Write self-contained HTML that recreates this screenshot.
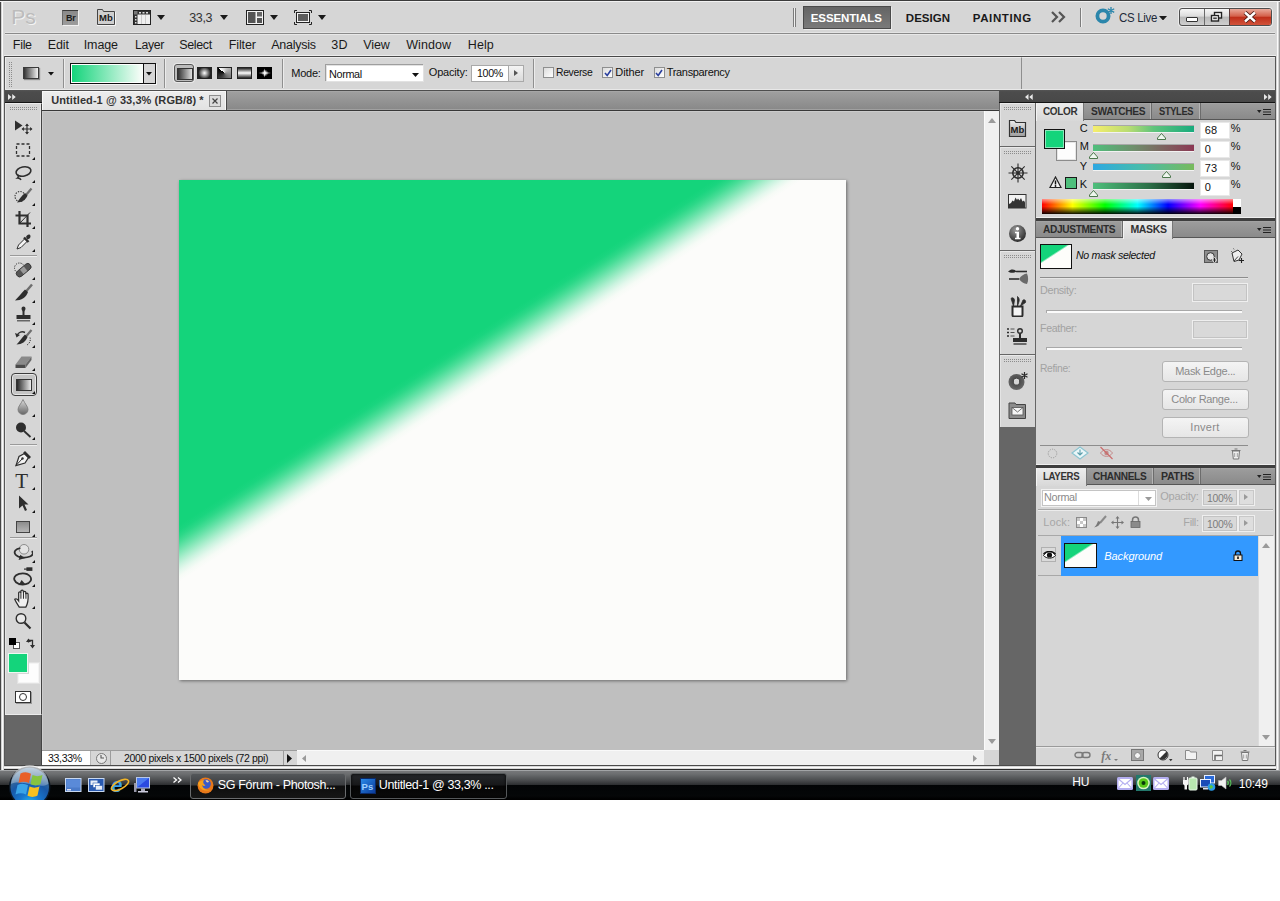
<!DOCTYPE html>
<html lang="en">
<head>
<meta charset="utf-8">
<title>Untitled-1 @ 33,3% (RGB/8) *</title>
<style>
*{box-sizing:border-box;margin:0;padding:0}
html,body{width:1280px;height:901px;overflow:hidden;background:#fff}
body{font-family:"Liberation Sans","DejaVu Sans",sans-serif;font-size:11px;color:#111;position:relative}
.a{position:absolute}
.t{position:absolute;white-space:nowrap;line-height:1}
#win{left:0;top:0;width:1280px;height:769px;background:#d6d6d6}
/* window frame */
#frameL{left:0;top:0;width:5px;height:770px;background:linear-gradient(90deg,#454545 0,#454545 1px,#d2d2d2 1px,#d2d2d2 2px,#fafafa 2px,#fafafa 3px,#d8d8d8 3px,#d8d8d8 4px,transparent 4px)}
#frameL2{left:4px;top:56px;width:1px;height:710px;background:#585858}
#frameR{left:1275px;top:0;width:5px;height:770px;background:linear-gradient(90deg,transparent 0,transparent 1px,#d8d8d8 1px,#d8d8d8 2px,#fafafa 2px,#fafafa 3px,#d4d4d4 3px,#d4d4d4 4px,#9a9a9a 4px)}
#frameR2{left:1275px;top:56px;width:1px;height:710px;background:#585858}
#frameT{left:0;top:0;width:1280px;height:2px;background:linear-gradient(#3c3c3c 0,#3c3c3c 1px,#f2f2f2 1px)}
#frameB{left:0;top:765px;width:1280px;height:5px;background:linear-gradient(#4a4a4a 0,#4a4a4a 1px,#d8d8d8 1px,#d8d8d8 2px,#fafafa 2px,#fafafa 3px,#d8d8d8 3px,#d8d8d8 4px,#2a2a2a 4px)}
/* app bar */
#appbar{left:5px;top:2px;width:1270px;height:31px;background:#d6d6d6}
#appline{left:5px;top:32px;width:1270px;height:3px;background:linear-gradient(#e4e4e4 0,#e4e4e4 1px,#8a8a8a 1px,#8a8a8a 2px,#e8e8e8 2px)}
#menubar{left:5px;top:35px;width:1270px;height:21px;background:#d6d6d6}
.menu{font-size:12.5px;top:38px;color:#1a1a1a}
#optline{left:4px;top:55px;width:1272px;height:2px;background:linear-gradient(#ececec 0,#ececec 1px,#484848 1px)}
#optbar{left:5px;top:57px;width:1270px;height:33px;background:#d6d6d6;border-top:1px solid #ececec}
#optbox{left:5px;top:57px;width:1017px;height:32px;border-right:1px solid #8e8e8e;border-top:1px solid #ececec;border-left:1px solid #ececec;background:#d6d6d6}
#optline2{left:5px;top:89px;width:1270px;height:2px;background:linear-gradient(#e8e8e8 0,#e8e8e8 1px,#4e4e4e 1px)}
/* tab bar */
#tabbar{left:42px;top:91px;width:957px;height:19px;background:linear-gradient(#adadad 0,#9f9f9f 1px,#898989 18px,#a0a0a0 18px)}
#tabline{left:42px;top:110px;width:957px;height:2px;background:linear-gradient(#383838 0,#383838 1px,#cbcbcb 1px)}
#doctab{left:42px;top:91px;width:185px;height:19px;background:linear-gradient(#ededed,#e2e2e2);border-right:1px solid #4a4a4a;box-shadow:inset 1px 1px 0 #f8f8f8,inset -1px 0 0 #f8f8f8}
/* canvas area */
#canvas{left:42px;top:111px;width:942px;height:639px;background:#bfbfbf;border-left:1px solid #cdcdcd;border-top:1px solid #cbcbcb}
#doc{left:179px;top:180px;width:667px;height:500px;box-shadow:1px 1px 3px rgba(0,0,0,.45)}
/* scrollbars */
#vscroll{left:984px;top:111px;width:16px;height:639px;background:#f0f0f0;border-left:1px solid #fafafa;border-right:1px solid #444}
#hscroll{left:297px;top:750px;width:687px;height:15px;background:#f0f0f0;border-top:1px solid #fafafa}
#corner{left:984px;top:750px;width:16px;height:15px;background:#d6d6d6;border-right:1px solid #444}
#status{left:42px;top:750px;width:255px;height:15px;background:#d6d6d6;border-top:1px solid #9c9c9c}
/* toolbox */
#tbhead{left:5px;top:90px;width:37px;height:13px;background:linear-gradient(#555 0,#4c4c4c 2px,#484848 12px,#141414 12px)}
#toolbox{left:5px;top:103px;width:37px;height:612px;background:#d6d6d6;border-right:1px solid #444;border-top:1px solid #ececec;border-bottom:1px solid #ececec;box-shadow:inset -1px 0 0 #e6e6e6,inset 1px 0 0 #e6e6e6}
#tbdark{left:5px;top:715px;width:37px;height:50px;background:#666;border-right:1px solid #444}
.sep{left:10px;width:27px;height:2px;background:linear-gradient(#9a9a9a 0,#9a9a9a 1px,#eee 1px)}

/* right dock */
#dockbg{left:999px;top:90px;width:37px;height:675px;background:#666}
#dockhead{left:999px;top:90px;width:276px;height:13px;background:linear-gradient(#555 0,#4c4c4c 2px,#484848 12px,#141414 12px)}
.iconpanel{left:1000px;width:35px;background:#d6d6d6}
.panel{left:1036px;width:239px;background:#d6d6d6}
.tabrow{left:1036px;width:239px;height:17px;background:linear-gradient(#a9a9a9 0,#9c9c9c 1px,#8a8a8a 16px);border-bottom:1px solid #565656}
.ptab{position:absolute;top:0;height:17px;font-size:11px;line-height:17px;text-align:center;color:#222;border-right:1px solid #6f6f6f;letter-spacing:.2px}
.ptab.on{background:linear-gradient(#e9e9e9,#d6d6d6);height:18px}
.psep{left:1036px;width:239px;height:4px;background:#4c4c4c}
.dis{color:#9b9b9b}
.btn{position:absolute;border:1px solid #b4b4b4;border-radius:3px;background:linear-gradient(#f4f4f4,#e6e6e6);color:#8a8a8a;text-align:center;font-size:11px}
.fld{position:absolute;border:1px solid #efefef;background:#d9d9d9;box-shadow:0 0 0 1px #c3c3c3 inset}
/* taskbar */
#taskbar{left:0;top:770px;width:1280px;height:30px;background:linear-gradient(#a2a4a6 0,#a2a4a6 1px,#767779 1px,#6c6e70 4px,#4c4e50 10px,#2e3032 14.6px,#020405 15px,#050708 26px,#000 29px)}
.tbtn{position:absolute;top:773px;height:25px;border:1px solid #5a5a5a;border-radius:3px;background:linear-gradient(#5c5f62 0,#3a3c3e 10px,#141414 11px,#1c1c1c 25px);color:#fff;font-size:12px}
</style>
</head>
<body>
<svg width="0" height="0" style="position:absolute"><defs><pattern id="gp" width="2" height="2" patternUnits="userSpaceOnUse"><rect width="1" height="1" fill="#8c8c8c"/></pattern></defs></svg>
<div id="win" class="a"></div>
<div id="appbar" class="a"></div>
<div id="appline" class="a"></div>
<div id="menubar" class="a"></div>
<div id="optline" class="a"></div>
<div id="optbar" class="a"></div>
<div id="optbox" class="a"></div>
<div id="optline2" class="a"></div>
<div id="tabbar" class="a"></div>
<div id="tabline" class="a"></div>
<div id="doctab" class="a"></div>
<div id="canvas" class="a"></div>
<div id="doc" class="a">
<svg width="667" height="500" viewBox="0 0 667 500" style="display:block">
<defs><linearGradient id="dg" gradientUnits="userSpaceOnUse" x1="0" y1="345" x2="26" y2="385.3">
<stop offset="0.0" stop-color="#14d47b"/><stop offset="0.1" stop-color="#1ad57f"/><stop offset="0.2" stop-color="#2cd888"/><stop offset="0.3" stop-color="#46dd96"/><stop offset="0.4" stop-color="#66e2a8"/><stop offset="0.5" stop-color="#88e8ba"/><stop offset="0.6" stop-color="#aaeecd"/><stop offset="0.7" stop-color="#caf3df"/><stop offset="0.8" stop-color="#e4f8ed"/><stop offset="0.9" stop-color="#f6fbf6"/><stop offset="1.0" stop-color="#fcfcfa"/>
</linearGradient></defs>
<rect width="667" height="500" fill="url(#dg)"/>
</svg>
</div>
<div id="vscroll" class="a"></div>
<div id="hscroll" class="a"></div>
<div id="corner" class="a"></div>
<div id="status" class="a"></div>
<div id="tbhead" class="a"></div>
<div id="toolbox" class="a"></div>
<div id="tbdark" class="a"></div>
<div id="dockbg" class="a"></div>
<div id="dockhead" class="a"></div>
<div class="t" style='left:11.2px;top:6.00px;font-size:21px;color:#f4f4f4;margin-left:1px;margin-top:1px;'>Ps</div><div class="t" style='left:11.2px;top:6.00px;font-size:21px;color:#bcbcbc;'>Ps</div><div class="a" style="left:62px;top:10px;width:16px;height:15px;background:linear-gradient(#8a8a8a,#9c9c9c);border-top:1px solid #3a3a3a;border-left:1px solid #6a6a6a;box-shadow:1px 1px 0 #f0f0f0"></div><div class="t" style='left:66.0px;top:14.00px;font-size:9px;letter-spacing:-0.22px;font-weight:bold;color:#1a1a1a;'>Br</div><svg class="a" style="left:96px;top:8px" width="20" height="18" viewBox="0 0 20 18"><path d="M1.5 16.5V1.5H6.5L7.5 3.5H18.5V16.5Z" fill="#cfcfcf" stroke="#444" stroke-width="1"/><path d="M1 17.5H19.5V4" fill="none" stroke="#f4f4f4" stroke-width="1"/></svg><div class="t" style='left:98.9px;top:13.00px;font-size:9.5px;letter-spacing:0.21px;font-weight:bold;color:#1a1a1a;'>Mb</div><svg class="a" style="left:133px;top:10px" width="19" height="16" viewBox="0 0 19 16"><rect x=".5" y=".5" width="17" height="14" fill="#f0f0f0" stroke="#222"/><rect x="1" y="1" width="16" height="3.5" fill="#333"/><rect x="1" y="1" width="3.5" height="13" fill="#333"/><rect x="1" y="1" width="3.5" height="3.5" fill="#777"/><path d="M6 2h2v1.5h-2zM9.5 2h2v1.5h-2zM13 2h2v1.5h-2z" fill="#ddd"/><path d="M2 6h1.5v1.5h-1.5zM2 9h1.5v1.5h-1.5zM2 12h1.5v1.5h-1.5z" fill="#ddd"/><path d="M8.5 5v9M12.5 5v9" stroke="#ccc" stroke-width="1"/></svg><svg class="a" style="left:157px;top:15px" width="8" height="5" viewBox="0 0 8 5"><path d="M0 0H8 L4 5Z" fill="#1a1a1a"/></svg><div class="t" style='left:189.2px;top:12.00px;font-size:12.5px;letter-spacing:-0.34px;color:#333;'>33,3</div><svg class="a" style="left:220px;top:15px" width="8" height="5" viewBox="0 0 8 5"><path d="M0 0H8 L4 5Z" fill="#1a1a1a"/></svg><svg class="a" style="left:246px;top:10px" width="19" height="16" viewBox="0 0 19 16"><rect x=".5" y=".5" width="17" height="14" fill="#f4f4f4" stroke="#222"/><rect x="2" y="2" width="7.5" height="11" fill="#555"/><rect x="11" y="2" width="5" height="4.5" fill="#666"/><rect x="11" y="8" width="5" height="5" fill="#555"/></svg><svg class="a" style="left:270px;top:15px" width="8" height="5" viewBox="0 0 8 5"><path d="M0 0H8 L4 5Z" fill="#1a1a1a"/></svg><svg class="a" style="left:294px;top:10px" width="19" height="16" viewBox="0 0 19 16"><path d="M.5 3V.5H3M15 .5h2.5V3M17.5 12v2.5H15M3 14.5H.5V12" fill="none" stroke="#222"/><rect x="2.5" y="2.5" width="13" height="10" fill="#f4f4f4" stroke="#222"/><rect x="4" y="4" width="10" height="7" fill="#5c5c5c"/></svg><svg class="a" style="left:318px;top:15px" width="8" height="5" viewBox="0 0 8 5"><path d="M0 0H8 L4 5Z" fill="#1a1a1a"/></svg><div class="a" style="left:793px;top:8px;width:1px;height:19px;background:#7c7c7c"></div><div class="a" style="left:795px;top:8px;width:1px;height:19px;background:#7c7c7c"></div><div class="a" style="left:794px;top:8px;width:1px;height:19px;background:#f0f0f0"></div><div class="a" style="left:803px;top:6px;width:88px;height:23px;background:linear-gradient(#646464,#7a7a7a);border:1px solid #4a4a4a;box-shadow:1px 1px 0 #ececec"></div><div class="t" style='left:810.8px;top:13.00px;font-size:11.5px;letter-spacing:-0.13px;font-weight:bold;color:#fff;'>ESSENTIALS</div><div class="t" style='left:905.8px;top:13.00px;font-size:11.5px;letter-spacing:0.05px;font-weight:bold;color:#1a1a1a;'>DESIGN</div><div class="t" style='left:972.8px;top:13.00px;font-size:11.5px;letter-spacing:0.60px;font-weight:bold;color:#1a1a1a;'>PAINTING</div><svg class="a" style="left:1051px;top:11px" width="16" height="12" viewBox="0 0 16 12"><path d="M1 1L6 6L1 11M8 1L13 6L8 11" fill="none" stroke="#555" stroke-width="2.2"/></svg><div class="a" style="left:1080px;top:8px;width:1px;height:19px;background:#7c7c7c"></div><div class="a" style="left:1081px;top:8px;width:1px;height:19px;background:#f0f0f0"></div><svg class="a" style="left:1094px;top:7px" width="22" height="17" viewBox="0 0 22 17"><circle cx="9" cy="9" r="5.6" fill="none" stroke="#2b86ab" stroke-width="3.8"/><path d="M17 0v7M13.8 1.8l6.4 3.6M13.8 5.4l6.4-3.6" stroke="#2b86ab" stroke-width="1.3"/></svg><div class="t" style='left:1118.8px;top:12.00px;font-size:12.5px;letter-spacing:-0.35px;transform:scaleX(0.919);transform-origin:0 0;color:#1e2a3a;'>CS Live</div><svg class="a" style="left:1159px;top:15.5px" width="8" height="4.5" viewBox="0 0 8 4.5"><path d="M0 0H8 L4 4.5Z" fill="#1a1a1a"/></svg><div class="a" style="left:1179px;top:8px;width:93px;height:18px;border:1px solid #4e4e4e;border-radius:3px;background:linear-gradient(#f6f6f6 0,#dcdcdc 45%,#b9b9b9 50%,#cfcfcf 100%);box-shadow:0 0 0 1px rgba(255,255,255,.5)"></div><div class="a" style="left:1229.5px;top:9px;width:41.5px;height:16px;border-radius:0 2px 2px 0;background:linear-gradient(#e9a99a 0,#d4604a 45%,#bf2f1a 52%,#d2533a 100%)"></div><div class="a" style="left:1204px;top:9px;width:1px;height:16px;background:#6a6a6a"></div><div class="a" style="left:1229px;top:9px;width:1px;height:16px;background:#5a3a3a"></div><div class="a" style="left:1186px;top:17px;width:12px;height:4.5px;background:#fff;border:1px solid #333;border-radius:1px"></div><svg class="a" style="left:1210px;top:11px" width="14" height="12" viewBox="0 0 14 12"><rect x="4.5" y="1.5" width="7" height="5.5" fill="#fff" stroke="#222" stroke-width="1.4"/><rect x="1.5" y="4.5" width="7" height="5.5" fill="#fff" stroke="#222" stroke-width="1.4"/><rect x="3.2" y="6.4" width="3.6" height="1.8" fill="#444"/></svg><svg class="a" style="left:1243px;top:11px" width="14" height="12" viewBox="0 0 14 12"><path d="M2 1.5L12 10.5M12 1.5L2 10.5" stroke="#4a1a14" stroke-width="4.2"/><path d="M2 1.5L12 10.5M12 1.5L2 10.5" stroke="#fff" stroke-width="2.4"/></svg>
<div class="t" style='left:12.8px;top:39.00px;font-size:12.5px;letter-spacing:-0.29px;color:#1a1a1a;'>File</div><div class="t" style='left:47.8px;top:39.00px;font-size:12.5px;letter-spacing:-0.14px;color:#1a1a1a;'>Edit</div><div class="t" style='left:83.8px;top:39.00px;font-size:12.5px;letter-spacing:-0.15px;color:#1a1a1a;'>Image</div><div class="t" style='left:134.8px;top:39.00px;font-size:12.5px;letter-spacing:-0.35px;transform:scaleX(0.982);transform-origin:0 0;color:#1a1a1a;'>Layer</div><div class="t" style='left:179.2px;top:39.00px;font-size:12.5px;letter-spacing:-0.35px;color:#1a1a1a;'>Select</div><div class="t" style='left:228.8px;top:39.00px;font-size:12.5px;letter-spacing:-0.13px;color:#1a1a1a;'>Filter</div><div class="t" style='left:271.2px;top:39.00px;font-size:12.5px;letter-spacing:-0.26px;color:#1a1a1a;'>Analysis</div><div class="t" style='left:331.2px;top:39.00px;font-size:12.5px;letter-spacing:0.26px;color:#1a1a1a;'>3D</div><div class="t" style='left:363.2px;top:39.00px;font-size:12.5px;letter-spacing:-0.09px;color:#1a1a1a;'>View</div><div class="t" style='left:406.2px;top:39.00px;font-size:12.5px;letter-spacing:0.09px;color:#1a1a1a;'>Window</div><div class="t" style='left:467.8px;top:39.00px;font-size:12.5px;letter-spacing:0.07px;color:#1a1a1a;'>Help</div>
<svg class="a" style="left:9px;top:62px" width="4" height="25" shape-rendering="crispEdges"><rect width="4" height="25" fill="url(#gp)"/></svg><div class="a" style="left:23px;top:67px;width:16px;height:12px;background:linear-gradient(90deg,#333,#f2f2f2);border:1px solid #3a3a3a;box-shadow:1px 1px 1px rgba(0,0,0,.35)"></div><svg class="a" style="left:48px;top:72px" width="6" height="3.5" viewBox="0 0 6 3.5"><path d="M0 0H6 L3 3.5Z" fill="#111"/></svg><div class="a" style="left:63px;top:59px;width:1px;height:29px;background:#8f8f8f"></div><div class="a" style="left:64px;top:59px;width:1px;height:29px;background:#ececec"></div><div class="a" style="left:70px;top:63px;width:86px;height:21px;background:#d6d6d6;border:1px solid #111;box-shadow:1px 1px 0 #f4f4f4"></div><div class="a" style="left:72px;top:65px;width:71px;height:17px;background:linear-gradient(90deg,#14d47b,#fdfdfb)"></div><div class="a" style="left:71px;top:64px;width:73px;height:19px;border:1px solid #fff;border-right:none"></div><div class="a" style="left:143px;top:64px;width:1px;height:19px;background:#111"></div><svg class="a" style="left:146px;top:72px" width="6" height="3.5" viewBox="0 0 6 3.5"><path d="M0 0H6 L3 3.5Z" fill="#111"/></svg><div class="a" style="left:164px;top:59px;width:1px;height:29px;background:#8f8f8f"></div><div class="a" style="left:165px;top:59px;width:1px;height:29px;background:#ececec"></div><div class="a" style="left:174px;top:64px;width:20px;height:18px;border:1px solid #555;border-radius:3px;background:#bcbcbc;box-shadow:0 0 0 1px #e8e8e8"></div><div class="a" style="left:177px;top:67.5px;width:16px;height:12px;background:linear-gradient(90deg,#333,#e0e0e0);border:1px solid #333"></div><div class="a" style="left:196.5px;top:67px;width:15.5px;height:12px;background:radial-gradient(circle at 50% 50%,#fff 0,#222 75%);border:1px solid #222"></div><div class="a" style="left:216.5px;top:67px;width:15.5px;height:12px;background:conic-gradient(from -52deg at 50% 50%,#fff,#aaa 30%,#555 65%,#000);border:1px solid #222"></div><div class="a" style="left:236.5px;top:67px;width:15.5px;height:12px;background:linear-gradient(#222,#fff 50%,#222);border:1px solid #222"></div><div class="a" style="left:256.5px;top:67px;width:15.5px;height:12px;background:#000;border:1px solid #000"></div><svg class="a" style="left:257.5px;top:68px" width="13.5" height="10" viewBox="0 0 13.5 10"><defs><radialGradient id="dm"><stop offset="0" stop-color="#fff"/><stop offset="1" stop-color="#fff" stop-opacity="0"/></radialGradient></defs><path d="M6.7 .5L7.5 4.2L13 5L7.5 5.8L6.7 9.5L5.9 5.8L.5 5L5.9 4.2z" fill="#ddd"/><circle cx="7" cy="5" r="3.5" fill="url(#dm)"/></svg><div class="a" style="left:282px;top:59px;width:1px;height:29px;background:#8f8f8f"></div><div class="a" style="left:283px;top:59px;width:1px;height:29px;background:#ececec"></div><div class="t" style='left:291.3px;top:68.00px;font-size:11px;letter-spacing:-0.25px;color:#111;'>Mode:</div><div class="a" style="left:325.5px;top:65px;width:98.5px;height:17px;background:#fff;border:1px solid #e2e2e2;box-shadow:-1px -1px 0 #9e9e9e"></div><div class="t" style='left:328.8px;top:69.00px;font-size:11px;letter-spacing:-0.35px;transform:scaleX(0.984);transform-origin:0 0;color:#111;'>Normal</div><svg class="a" style="left:412px;top:73px" width="7" height="4" viewBox="0 0 7 4"><path d="M0 0H7 L3.5 4Z" fill="#111"/></svg><div class="t" style='left:428.8px;top:67.00px;font-size:11px;letter-spacing:-0.19px;color:#111;'>Opacity:</div><div class="a" style="left:471px;top:64.5px;width:38px;height:17px;background:#fff;border:1px solid #a9a9a9"></div><div class="t" style='left:476.8px;top:68.00px;font-size:11px;letter-spacing:-0.35px;transform:scaleX(0.966);transform-origin:0 0;color:#111;'>100%</div><div class="a" style="left:508px;top:64.5px;width:16px;height:17px;background:linear-gradient(#f4f4f4,#dadada);border:1px solid #a9a9a9"></div><svg class="a" style="left:514px;top:70px" width="4" height="6" viewBox="0 0 4 6"><path d="M0 0L4 3L0 6Z" fill="#555"/></svg><div class="a" style="left:533px;top:59px;width:1px;height:29px;background:#8f8f8f"></div><div class="a" style="left:534px;top:59px;width:1px;height:29px;background:#ececec"></div><div class="a" style="left:543px;top:67px;width:11px;height:11px;background:linear-gradient(135deg,#dcdcdc,#fff);border:1px solid #8e8f8f"></div><div class="t" style='left:556.3px;top:67.00px;font-size:11px;letter-spacing:-0.35px;transform:scaleX(0.943);transform-origin:0 0;color:#111;'>Reverse</div><div class="a" style="left:602px;top:67px;width:11px;height:11px;background:linear-gradient(135deg,#dcdcdc,#fff);border:1px solid #8e8f8f"></div><svg class="a" style="left:603.5px;top:68.5px" width="8" height="8" viewBox="0 0 8 8"><path d="M1 4L3.2 6.5L7 1" fill="none" stroke="#2a3f9e" stroke-width="1.6"/></svg><div class="t" style='left:615.3px;top:67.00px;font-size:11px;letter-spacing:-0.09px;color:#111;'>Dither</div><div class="a" style="left:653.5px;top:67px;width:11px;height:11px;background:linear-gradient(135deg,#dcdcdc,#fff);border:1px solid #8e8f8f"></div><svg class="a" style="left:655px;top:68.5px" width="8" height="8" viewBox="0 0 8 8"><path d="M1 4L3.2 6.5L7 1" fill="none" stroke="#2a3f9e" stroke-width="1.6"/></svg><div class="t" style='left:666.8px;top:67.00px;font-size:11px;letter-spacing:-0.34px;color:#111;'>Transparency</div>
<svg class="a" style="left:8px;top:94px" width="8" height="6" viewBox="0 0 8 6"><path d="M0 0L3.5 3L0 6ZM4.2 0L7.7 3L4.2 6Z" fill="#e8e8e8"/></svg><svg class="a" style="left:10px;top:107px" width="28" height="3" shape-rendering="crispEdges"><rect width="28" height="3" fill="url(#gp)"/></svg><svg class="a" style="left:13px;top:116.5px" width="20" height="20" viewBox="0 0 20 20"><path d="M2 3.5L9.5 8.5L2 13.5Z" fill="#2e2e2e"/><path d="M14 7.5v9M9.5 12h9" stroke="#2e2e2e" stroke-width="1.2"/><path d="M14 6.5l-2 2.4h4zM14 17.5l-2-2.4h4zM8.5 12l2.4-2v4zM19.5 12l-2.4-2v4z" fill="#2e2e2e"/></svg><svg class="a" style="left:13px;top:139.5px" width="20" height="20" viewBox="0 0 20 20"><rect x="3.5" y="4" width="13" height="12" fill="none" stroke="#2e2e2e" stroke-width="1.3" stroke-dasharray="3 2"/></svg><svg class="a" style="left:31.5px;top:156.5px" width="3" height="3" viewBox="0 0 3 3"><path d="M3 0V3H0Z" fill="#111"/></svg><svg class="a" style="left:13px;top:162.5px" width="20" height="20" viewBox="0 0 20 20"><ellipse cx="10.5" cy="8.5" rx="7.5" ry="4.6" fill="none" stroke="#2e2e2e" stroke-width="1.6" transform="rotate(-12 10.5 8.5)"/><path d="M4.5 11.5c1 1.5 1.5 2.5 0 3.5c1.5 0 3 .5 3.5 2" fill="none" stroke="#2e2e2e" stroke-width="1.4"/></svg><svg class="a" style="left:31.5px;top:179.5px" width="3" height="3" viewBox="0 0 3 3"><path d="M3 0V3H0Z" fill="#111"/></svg><svg class="a" style="left:13px;top:186px" width="20" height="20" viewBox="0 0 20 20"><circle cx="7" cy="10.5" r="5" fill="none" stroke="#2e2e2e" stroke-width="1.1" stroke-dasharray="1.3 1.3"/><path d="M18.5 2.5L13 9" stroke="#6e6e6e" stroke-width="2.2"/><path d="M14.5 9.5C13 13.5 9 16.5 4 16.5C6 13.5 8.5 10 12 7z" fill="#2e2e2e"/></svg><svg class="a" style="left:31.5px;top:203px" width="3" height="3" viewBox="0 0 3 3"><path d="M3 0V3H0Z" fill="#111"/></svg><svg class="a" style="left:13px;top:209px" width="20" height="20" viewBox="0 0 20 20"><path d="M6.5 2v12.5H18M2.5 6.5h12V18" fill="none" stroke="#2e2e2e" stroke-width="2.2"/><path d="M6.5 14.5L17 3.5" stroke="#2e2e2e" stroke-width="1"/></svg><svg class="a" style="left:31.5px;top:226px" width="3" height="3" viewBox="0 0 3 3"><path d="M3 0V3H0Z" fill="#111"/></svg><svg class="a" style="left:13px;top:231.5px" width="20" height="20" viewBox="0 0 20 20"><path d="M4 17l1.5-4L12 6.5l2.5 2.5L8 15.5z" fill="#f4f4f4" stroke="#2e2e2e" stroke-width="1"/><path d="M11 5.5l4.5 4.5" stroke="#2e2e2e" stroke-width="2.4"/><path d="M13 5c1-3 4.5-3.5 4.5-0.5c0 1.5-1.5 2.5-3 3z" fill="#2e2e2e"/></svg><svg class="a" style="left:31.5px;top:248.5px" width="3" height="3" viewBox="0 0 3 3"><path d="M3 0V3H0Z" fill="#111"/></svg><div class="a sep" style="left:10px;top:255px;width:27px;height:2px;"></div><svg class="a" style="left:13px;top:259.5px" width="20" height="20" viewBox="0 0 20 20"><circle cx="6.5" cy="8" r="5" fill="none" stroke="#2e2e2e" stroke-width="1" stroke-dasharray="1.2 1.2"/><rect x="2" y="7" width="17" height="6.5" rx="3" fill="#555" stroke="#2e2e2e" stroke-width=".8" transform="rotate(-40 10.5 10)"/><rect x="8" y="7.5" width="5" height="5.5" fill="#9a9a9a" transform="rotate(-40 10.5 10)"/></svg><svg class="a" style="left:31.5px;top:276.5px" width="3" height="3" viewBox="0 0 3 3"><path d="M3 0V3H0Z" fill="#111"/></svg><svg class="a" style="left:13px;top:282.5px" width="20" height="20" viewBox="0 0 20 20"><path d="M19 1.5L13 8.5" stroke="#6e6e6e" stroke-width="2.4"/><path d="M15 9C13.5 14 8.5 17.5 2 17.5C5 14.5 8 10.5 12 6.5z" fill="#2e2e2e"/></svg><svg class="a" style="left:31.5px;top:299.5px" width="3" height="3" viewBox="0 0 3 3"><path d="M3 0V3H0Z" fill="#111"/></svg><svg class="a" style="left:13px;top:305px" width="20" height="20" viewBox="0 0 20 20"><path d="M8.5 3.5a2 2 0 0 1 4 0c0 1.5-1 2-1 3.5v3h-2v-3c0-1.5-1-2-1-3.5z" fill="#2e2e2e"/><rect x="3.5" y="10" width="14" height="4" fill="#2e2e2e"/><rect x="4" y="15" width="13" height="1.5" fill="#666"/></svg><svg class="a" style="left:31.5px;top:322px" width="3" height="3" viewBox="0 0 3 3"><path d="M3 0V3H0Z" fill="#111"/></svg><svg class="a" style="left:13px;top:328px" width="20" height="20" viewBox="0 0 20 20"><path d="M18.5 2L13 8.5" stroke="#6e6e6e" stroke-width="2.2"/><path d="M14.5 9C13 13.5 9 16.5 3.5 16.5C6 14 8.5 10 12 6.5z" fill="#2e2e2e"/><path d="M4 7.5c1.5-3.5 5-4.5 8-3" fill="none" stroke="#2e2e2e" stroke-width="1.4"/><path d="M2 5l1.5 4.5l3.5-2.5z" fill="#2e2e2e"/><path d="M17 9.5c1 3-.5 6-3 7.5" fill="none" stroke="#2e2e2e" stroke-width="1" stroke-dasharray="1.2 1.2"/></svg><svg class="a" style="left:31.5px;top:345px" width="3" height="3" viewBox="0 0 3 3"><path d="M3 0V3H0Z" fill="#111"/></svg><svg class="a" style="left:13px;top:351px" width="20" height="20" viewBox="0 0 20 20"><path d="M2.5 13.5L8.5 5.5H18.5L12.5 13.5Z" fill="#8a8a8a"/><path d="M2.5 13.5H12.5V17H2.5Z" fill="#4a4a4a"/><path d="M12.5 13.5L18.5 5.5V9L12.5 17Z" fill="#666"/></svg><svg class="a" style="left:31.5px;top:368px" width="3" height="3" viewBox="0 0 3 3"><path d="M3 0V3H0Z" fill="#111"/></svg><div class="a" style="left:10.5px;top:373px;width:26px;height:23px;border:1px solid #3c3c3c;border-radius:4px;background:#c4c4c4;box-shadow:inset 0 0 0 1px #e6e6e6"></div><div class="a" style="left:16px;top:379px;width:16px;height:12px;background:linear-gradient(90deg,#2a2a2a,#ececec);border:1px solid #333"></div><svg class="a" style="left:31.5px;top:391px" width="3" height="3" viewBox="0 0 3 3"><path d="M3 0V3H0Z" fill="#111"/></svg><svg class="a" style="left:13px;top:397px" width="20" height="20" viewBox="0 0 20 20"><defs><linearGradient id="dr" x1="0" y1="0" x2="0" y2="1"><stop offset="0" stop-color="#ddd"/><stop offset="1" stop-color="#666"/></linearGradient></defs><path d="M10 2.5C12 7 15 9.5 15 12.5a5 5 0 0 1-10 0C5 9.5 8 7 10 2.5z" fill="url(#dr)" stroke="#777" stroke-width=".8"/></svg><svg class="a" style="left:31.5px;top:414px" width="3" height="3" viewBox="0 0 3 3"><path d="M3 0V3H0Z" fill="#111"/></svg><svg class="a" style="left:13px;top:419.5px" width="20" height="20" viewBox="0 0 20 20"><circle cx="8" cy="7.5" r="5" fill="#2e2e2e"/><path d="M11 11l6.5 6" stroke="#2e2e2e" stroke-width="1.8"/></svg><svg class="a" style="left:31.5px;top:436.5px" width="3" height="3" viewBox="0 0 3 3"><path d="M3 0V3H0Z" fill="#111"/></svg><div class="a sep" style="left:10px;top:443.5px;width:27px;height:2px;"></div><svg class="a" style="left:13px;top:448px" width="20" height="20" viewBox="0 0 20 20"><path d="M3 17.5L6 8.5L11.5 5.5L15.5 9.5L12 15z" fill="#f2f2f2" stroke="#2e2e2e" stroke-width="1.2"/><path d="M3 17.5L9 11" stroke="#2e2e2e" stroke-width="1"/><circle cx="9.5" cy="10.5" r="1.2" fill="#2e2e2e"/><path d="M12 3l6 6l-2 2l-6-6z" fill="#2e2e2e"/></svg><svg class="a" style="left:31.5px;top:465px" width="3" height="3" viewBox="0 0 3 3"><path d="M3 0V3H0Z" fill="#111"/></svg><div class="t" style='left:15.2px;top:471.00px;font-size:21px;font-family:"Liberation Serif","DejaVu Serif",serif;color:#2e2e2e;'>T</div><svg class="a" style="left:31.5px;top:486.5px" width="3" height="3" viewBox="0 0 3 3"><path d="M3 0V3H0Z" fill="#111"/></svg><svg class="a" style="left:13px;top:493px" width="20" height="20" viewBox="0 0 20 20"><path d="M6 2.5V15.5L9.5 12.5L12 18L14 17L11.5 11.5H15.5Z" fill="#2e2e2e"/></svg><svg class="a" style="left:31.5px;top:510px" width="3" height="3" viewBox="0 0 3 3"><path d="M3 0V3H0Z" fill="#111"/></svg><svg class="a" style="left:13px;top:516.5px" width="20" height="20" viewBox="0 0 20 20"><defs><linearGradient id="rc" x1="0" y1="0" x2="0" y2="1"><stop offset="0" stop-color="#8a8a8a"/><stop offset="1" stop-color="#b8b8b8"/></linearGradient></defs><rect x="3.5" y="4.5" width="13" height="11" fill="url(#rc)" stroke="#444" stroke-width="1"/></svg><svg class="a" style="left:31.5px;top:533.5px" width="3" height="3" viewBox="0 0 3 3"><path d="M3 0V3H0Z" fill="#111"/></svg><div class="a sep" style="left:10px;top:537px;width:27px;height:2px;"></div><svg class="a" style="left:13px;top:543px" width="20" height="20" viewBox="0 0 20 20"><g transform="translate(-2.2,-1.5) scale(1.2)"><circle cx="11" cy="6.5" r="4" fill="#e4e4e4" stroke="#888" stroke-width=".8"/><path d="M8 5.5c-4 .5-6 3-4 5.5c2 2.5 8 3 12 1.5c2.5-1 3-3 1.5-4.5" fill="none" stroke="#2e2e2e" stroke-width="1.5"/><path d="M6.5 15.5l5-1.5l-3.5-3z" fill="#2e2e2e"/></g></svg><svg class="a" style="left:31.5px;top:560px" width="3" height="3" viewBox="0 0 3 3"><path d="M3 0V3H0Z" fill="#111"/></svg><svg class="a" style="left:13px;top:567px" width="20" height="20" viewBox="0 0 20 20"><g transform="translate(-2.2,-1.5) scale(1.2)"><path d="M16 9c2 2.5 .5 5.5-3.5 6.5c-4 1-8.5-.5-9.5-3.5c-1-3 2.5-5.5 7-5.5c2.5 0 4.5 .5 6 2.5" fill="none" stroke="#2e2e2e" stroke-width="1.5"/><path d="M6.5 16.5l5.5-1l-3-3.5z" fill="#2e2e2e"/><rect x="13" y="1.5" width="5" height="3" fill="#2e2e2e"/><path d="M11 3h3" stroke="#2e2e2e" stroke-width="1"/></g></svg><svg class="a" style="left:31.5px;top:584px" width="3" height="3" viewBox="0 0 3 3"><path d="M3 0V3H0Z" fill="#111"/></svg><svg class="a" style="left:13px;top:588.5px" width="20" height="20" viewBox="0 0 20 20"><g transform="translate(-.5,-1.5) scale(1.12)"><path d="M6 17.5c-1.5-2.5-3-4.5-4-7c1-1 2.5 0 3.5 1.5V5c0-1.5 2-1.5 2 0V3.5c0-1.5 2.2-1.5 2.2 0V4.5c0-1.5 2.2-1.5 2.2 0V6c0-1.3 2-1.3 2 0c.3 4 0 8-2 11.5z" fill="#f0f0f0" stroke="#2e2e2e" stroke-width="1.1"/><path d="M7.5 5v5M9.8 4v6M12 5v5" stroke="#2e2e2e" stroke-width=".9"/></g></svg><svg class="a" style="left:31.5px;top:605.5px" width="3" height="3" viewBox="0 0 3 3"><path d="M3 0V3H0Z" fill="#111"/></svg><svg class="a" style="left:13px;top:611px" width="20" height="20" viewBox="0 0 20 20"><circle cx="8" cy="7.5" r="4.8" fill="#e8e8e8" stroke="#2e2e2e" stroke-width="1.4"/><path d="M11.5 11.5l6 6" stroke="#2e2e2e" stroke-width="2.2"/></svg><div class="a" style="left:12.5px;top:641.5px;width:7px;height:7px;background:#fff;border:1px solid #555"></div><div class="a" style="left:9px;top:638px;width:7px;height:7px;background:#000;border:1px solid #000"></div><svg class="a" style="left:26px;top:637px" width="11" height="12" viewBox="0 0 11 12"><path d="M2.5 5.5V3.5H6.5V9.5" fill="none" stroke="#2e2e2e" stroke-width="1.3"/><path d="M0 5l2.5-3.5L5 5zM4 8l2.5 3.5L9 8z" fill="#2e2e2e"/></svg><div class="a" style="left:18px;top:662.5px;width:20.5px;height:20.5px;background:#fdfdfd;border:1px solid #f4f4f4;box-shadow:0 0 0 1px #e2e2e2"></div><div class="a" style="left:8px;top:653px;width:20px;height:20px;background:#14d47b;border:1px solid #eef8f2;box-shadow:0 0 0 1px #d6d6d6"></div><div class="a" style="left:14.5px;top:690.5px;width:16.5px;height:12px;background:#fff;border:1px solid #333;box-shadow:1px 1px 0 #999"></div><div class="a" style="left:18.5px;top:692.5px;width:8px;height:8px;border:1px solid #333;border-radius:50%"></div>
<svg class="a" style="left:1025px;top:94px" width="8" height="6" viewBox="0 0 8 6"><path d="M3.5 0L0 3L3.5 6ZM7.7 0L4.2 3L7.7 6Z" fill="#e8e8e8"/></svg><svg class="a" style="left:1264px;top:94px" width="8" height="6" viewBox="0 0 8 6"><path d="M0 0L3.5 3L0 6ZM4.2 0L7.7 3L4.2 6Z" fill="#e8e8e8"/></svg><div class="a" style="left:1000px;top:103px;width:35px;height:43px;background:#d6d6d6;border-top:1px solid #e9e9e9;border-left:1px solid #e4e4e4"></div><svg class="a" style="left:1004px;top:107px" width="28" height="3" shape-rendering="crispEdges"><rect width="28" height="3" fill="url(#gp)"/></svg><div class="a" style="left:1000px;top:147px;width:35px;height:103px;background:#d6d6d6;border-top:1px solid #e9e9e9;border-left:1px solid #e4e4e4"></div><svg class="a" style="left:1004px;top:151px" width="28" height="3" shape-rendering="crispEdges"><rect width="28" height="3" fill="url(#gp)"/></svg><div class="a" style="left:1000px;top:251px;width:35px;height:103px;background:#d6d6d6;border-top:1px solid #e9e9e9;border-left:1px solid #e4e4e4"></div><svg class="a" style="left:1004px;top:255px" width="28" height="3" shape-rendering="crispEdges"><rect width="28" height="3" fill="url(#gp)"/></svg><div class="a" style="left:1000px;top:355px;width:35px;height:72px;background:#d6d6d6;border-top:1px solid #e9e9e9;border-left:1px solid #e4e4e4"></div><svg class="a" style="left:1004px;top:359px" width="28" height="3" shape-rendering="crispEdges"><rect width="28" height="3" fill="url(#gp)"/></svg><svg class="a" style="left:1008px;top:119px" width="20" height="19" viewBox="0 0 20 19"><defs><linearGradient id="mbg" x1="0" y1="0" x2="0" y2="1"><stop offset="0" stop-color="#eee"/><stop offset="1" stop-color="#9c9c9c"/></linearGradient></defs><path d="M1.5 17.5V1.5H6.5L8 3.5H17.5V17.5Z" fill="url(#mbg)" stroke="#333" stroke-width="1.2"/></svg><div class="t" style='left:1010.4px;top:125.00px;font-size:9.5px;letter-spacing:0.21px;font-weight:bold;color:#1a1a1a;'>Mb</div><svg class="a" style="left:1007.5px;top:162.5px" width="20" height="20" viewBox="0 0 20 20"><circle cx="10" cy="10" r="5.2" fill="none" stroke="#2c2c2c" stroke-width="1.6"/><circle cx="10" cy="10" r="1.8" fill="#2c2c2c"/><path d="M10 .5v19M.5 10h19M3.3 3.300l13.4 13.400M16.7 3.300L3.3 16.7" stroke="#2c2c2c" stroke-width="1.1"/></svg><svg class="a" style="left:1008px;top:194px" width="19" height="15" viewBox="0 0 19 15"><rect x=".5" y=".5" width="17.5" height="13.5" fill="#f2f2f2" stroke="#333"/><path d="M1 14V10l2-1l1.5-2.5l1.5 1l1.5-4l1.5 2.5l1-1.5l1.5 2l1.5-2.5l1.5 3.5l1.5-1l1 2V14z" fill="#333"/></svg><svg class="a" style="left:1008px;top:224px" width="19" height="19" viewBox="0 0 19 19"><defs><radialGradient id="ig" cx=".4" cy=".3" r=".8"><stop offset="0" stop-color="#9a9a9a"/><stop offset="1" stop-color="#1e1e1e"/></radialGradient></defs><circle cx="9.5" cy="9.5" r="8.5" fill="url(#ig)"/><circle cx="9.5" cy="4.8" r="1.7" fill="#fff"/><path d="M7 7.800h4v6h1.5v1.5H7v-1.5h1.5v-4.5H7z" fill="#fff"/></svg><svg class="a" style="left:1007px;top:268px" width="22" height="17" viewBox="0 0 22 17"><path d="M1 3.5c3-3 7-2.5 8.5 0c-2 1.5-6 2-8.5 0z" fill="#2c2c2c"/><path d="M9 3.5h11" stroke="#2c2c2c" stroke-width="1.6"/><path d="M2 11h10" stroke="#2c2c2c" stroke-width="1.6"/><path d="M12 11c2-3.5 5-5 8-5.5c1.5 3.5 1.5 7.5 0 10.5c-3-.5-6-2-8-5z" fill="#6a6a6a"/></svg><svg class="a" style="left:1008px;top:295px" width="19" height="22" viewBox="0 0 19 22"><path d="M4.5 11.5h10v8.5a1.5 1.5 0 0 1-1.5 1.5h-7a1.5 1.5 0 0 1-1.5-1.5z" fill="#f4f4f4" stroke="#2c2c2c" stroke-width="2"/><path d="M5.5 11L3 3.5c1.5-1.5 3-.5 3.5 1.5zM9.5 11V1.5c1.5 1 2 3 1.5 5zM12.5 11l2.5-6c2-.5 3 .5 2.5 2.5z" fill="#2c2c2c" stroke="#2c2c2c" stroke-width=".8"/></svg><svg class="a" style="left:1006px;top:327px" width="23" height="19" viewBox="0 0 23 19"><path d="M1 2h2M1 5.5h2M1 9h2" stroke="#2c2c2c" stroke-width="1.6"/><path d="M4.5 2h4M4.5 5.5h4M4.5 9h4" stroke="#555" stroke-width="1.2"/><circle cx="14" cy="4" r="2.3" fill="none" stroke="#2c2c2c" stroke-width="1.4"/><path d="M13 6.5h2v4.5h-2z" fill="#2c2c2c"/><rect x="7" y="11" width="14" height="4" fill="#2c2c2c"/><rect x="7.5" y="16" width="13" height="2" fill="#6a6a6a"/></svg><svg class="a" style="left:1007px;top:371px" width="22" height="20" viewBox="0 0 22 20"><defs><radialGradient id="csg" cx=".5" cy=".45" r=".6"><stop offset=".25" stop-color="#e0e0e0"/><stop offset=".3" stop-color="#4a4a4a"/><stop offset="1" stop-color="#6c6c6c"/></radialGradient></defs><circle cx="9.5" cy="11" r="8" fill="url(#csg)"/><circle cx="9.5" cy="11" r="2.6" fill="#d6d6d6"/><path d="M17.5 1v7M14.5 2.700l6 3.600M14.5 6.300l6-3.6" stroke="#2c2c2c" stroke-width="1.2"/></svg><svg class="a" style="left:1008px;top:402px" width="19" height="18" viewBox="0 0 19 18"><path d="M1 16.5V1h6l1 1.5h9.5V16.5z" fill="#8c8c8c" stroke="#444" stroke-width="1"/><rect x="4" y="5.5" width="11" height="7.5" fill="#f6f6f6" stroke="#555" stroke-width=".8"/><path d="M4 5.5l5.5 4.5l5.5-4.5" fill="none" stroke="#555" stroke-width=".8"/></svg>
<div class="a" style="left:1036px;top:103px;width:239px;height:114px;background:#d6d6d6"></div><div class="a tabrow" style="left:1036px;top:103px;width:239px;height:17px;"></div><div class="a" style="left:1036px;top:103px;width:48px;height:18px;background:linear-gradient(#ececec,#d8d8d8);border-right:1px solid #777;border-left:1px solid #f4f4f4;"></div><div class="t" style='left:1042.9px;top:106.00px;font-size:10.5px;letter-spacing:-0.35px;transform:scaleX(0.947);transform-origin:0 0;font-weight:bold;color:#333;'>COLOR</div><div class="a" style="left:1084px;top:103px;width:67.5px;height:16px;border-right:1px solid #6c6c6c;box-shadow:inset -2px 0 0 -1px #b4b4b4;"></div><div class="t" style='left:1090.9px;top:106.00px;font-size:10.5px;letter-spacing:-0.35px;transform:scaleX(0.970);transform-origin:0 0;font-weight:bold;color:#2c2c2c;'>SWATCHES</div><div class="a" style="left:1151.5px;top:103px;width:49px;height:16px;border-right:1px solid #6c6c6c;box-shadow:inset -2px 0 0 -1px #b4b4b4;"></div><div class="t" style='left:1158.9px;top:106.00px;font-size:10.5px;letter-spacing:-0.35px;transform:scaleX(0.884);transform-origin:0 0;font-weight:bold;color:#2c2c2c;'>STYLES</div><svg class="a" style="left:1257px;top:109px" width="15" height="8" viewBox="0 0 15 8"><path d="M0 1h4.5L2.250 4z" fill="#222"/><path d="M6 .5h8M6 3h8M6 5.5h8" stroke="#222" stroke-width="1.1"/></svg><div class="a" style="left:1056px;top:141px;width:20.5px;height:20px;background:#fdfdfd;border:1px solid #8c8c8c;box-shadow:inset 0 0 0 1px #e6e6e6"></div><div class="a" style="left:1044px;top:129px;width:20.5px;height:20px;background:#14d47b;border:1px solid #111;box-shadow:inset 0 0 0 1px #8ee8bd"></div><div class="t" style='left:1079.8px;top:123.00px;font-size:11px;color:#111;'>C</div><div class="a" style="left:1093px;top:126px;width:101px;height:6px;background:linear-gradient(90deg,#f6ee6c,#b9dc72 35%,#5fc47c 60%,#18ab7e);box-shadow:0 1px 0 #f2f2f2,0 -1px 0 #a8a8a8"></div><svg class="a" style="left:1157px;top:132.5px" width="9" height="7" viewBox="0 0 9 7"><path d="M4.5 .5L8.5 5V6.5H.5V5z" fill="#eef6ee" stroke="#3a6a3a" stroke-width=".9"/></svg><div class="a" style="left:1200px;top:122px;width:30px;height:17px;background:#fff;border:1px solid #e8e8e8"></div><div class="t" style='left:1204.8px;top:125.00px;font-size:11px;color:#111;'>68</div><div class="t" style='left:1230.8px;top:123.00px;font-size:11px;letter-spacing:1.04px;color:#111;'>%</div><div class="t" style='left:1079.8px;top:141.00px;font-size:11px;color:#111;'>M</div><div class="a" style="left:1093px;top:145px;width:101px;height:6px;background:linear-gradient(90deg,#4fbf7c,#6f8f6c 40%,#8c3854);box-shadow:0 1px 0 #f2f2f2,0 -1px 0 #a8a8a8"></div><svg class="a" style="left:1088.5px;top:151.5px" width="9" height="7" viewBox="0 0 9 7"><path d="M4.5 .5L8.5 5V6.5H.5V5z" fill="#eef6ee" stroke="#3a6a3a" stroke-width=".9"/></svg><div class="a" style="left:1200px;top:141px;width:30px;height:17px;background:#fff;border:1px solid #e8e8e8"></div><div class="t" style='left:1204.8px;top:144.00px;font-size:11px;color:#111;'>0</div><div class="t" style='left:1230.8px;top:141.00px;font-size:11px;letter-spacing:1.04px;color:#111;'>%</div><div class="t" style='left:1079.8px;top:161.00px;font-size:11px;color:#111;'>Y</div><div class="a" style="left:1093px;top:164px;width:101px;height:6px;background:linear-gradient(90deg,#2da8e2,#46bcae 45%,#78ba5c);box-shadow:0 1px 0 #f2f2f2,0 -1px 0 #a8a8a8"></div><svg class="a" style="left:1162px;top:170.5px" width="9" height="7" viewBox="0 0 9 7"><path d="M4.5 .5L8.5 5V6.5H.5V5z" fill="#eef6ee" stroke="#3a6a3a" stroke-width=".9"/></svg><div class="a" style="left:1200px;top:160px;width:30px;height:17px;background:#fff;border:1px solid #e8e8e8"></div><div class="t" style='left:1204.8px;top:163.00px;font-size:11px;color:#111;'>73</div><div class="t" style='left:1230.8px;top:161.00px;font-size:11px;letter-spacing:1.04px;color:#111;'>%</div><div class="t" style='left:1079.8px;top:179.00px;font-size:11px;color:#111;'>K</div><div class="a" style="left:1093px;top:183px;width:101px;height:6px;background:linear-gradient(90deg,#4fbf7c,#2c7048 55%,#06150c);box-shadow:0 1px 0 #f2f2f2,0 -1px 0 #a8a8a8"></div><svg class="a" style="left:1088.5px;top:189.5px" width="9" height="7" viewBox="0 0 9 7"><path d="M4.5 .5L8.5 5V6.5H.5V5z" fill="#eef6ee" stroke="#3a6a3a" stroke-width=".9"/></svg><div class="a" style="left:1200px;top:179px;width:30px;height:17px;background:#fff;border:1px solid #e8e8e8"></div><div class="t" style='left:1204.8px;top:182.00px;font-size:11px;color:#111;'>0</div><div class="t" style='left:1230.8px;top:179.00px;font-size:11px;letter-spacing:1.04px;color:#111;'>%</div><svg class="a" style="left:1048.5px;top:175.5px" width="13" height="13" viewBox="0 0 13 13"><path d="M6.5 1L12 11.5H1z" fill="#f4f4f4" stroke="#222" stroke-width="1.2"/><path d="M6.5 4.5v4" stroke="#111" stroke-width="1.5"/><circle cx="6.5" cy="10" r=".9" fill="#111"/></svg><div class="a" style="left:1064.5px;top:177px;width:12.5px;height:12px;background:#4fbf7c;border:1px solid #1a1a1a"></div><div class="a" style="left:1041.5px;top:199px;width:191px;height:15px;background:linear-gradient(rgba(255,255,255,.55) 0,rgba(255,255,255,0) 35%,rgba(0,0,0,0) 50%,rgba(0,0,0,.95) 100%),linear-gradient(90deg,#f00 0,#ff0 16%,#0f0 33%,#0ff 50%,#00f 66%,#f0f 83%,#f00 100%)"></div><div class="a" style="left:1232.5px;top:199px;width:8px;height:7.5px;background:#fff"></div><div class="a" style="left:1232.5px;top:206.5px;width:8px;height:7.5px;background:#000"></div><div class="a" style="left:1036px;top:217px;width:239px;height:4px;background:linear-gradient(#efefef 0,#efefef 1px,#3e3e3e 1px)"></div><div class="a" style="left:1036px;top:221px;width:239px;height:243px;background:#d6d6d6"></div><div class="a tabrow" style="left:1036px;top:221px;width:239px;height:17px;"></div><div class="a" style="left:1036px;top:221px;width:86.5px;height:16px;border-right:1px solid #6c6c6c;box-shadow:inset -2px 0 0 -1px #b4b4b4;"></div><div class="t" style='left:1042.9px;top:224.00px;font-size:10.5px;letter-spacing:-0.35px;transform:scaleX(0.965);transform-origin:0 0;font-weight:bold;color:#2c2c2c;'>ADJUSTMENTS</div><div class="a" style="left:1122.5px;top:221px;width:50px;height:18px;background:linear-gradient(#ececec,#d8d8d8);border-right:1px solid #777;border-left:1px solid #f4f4f4;"></div><div class="t" style='left:1130.4px;top:224.00px;font-size:10.5px;letter-spacing:-0.35px;font-weight:bold;color:#333;'>MASKS</div><svg class="a" style="left:1257px;top:227px" width="15" height="8" viewBox="0 0 15 8"><path d="M0 1h4.5L2.250 4z" fill="#222"/><path d="M6 .5h8M6 3h8M6 5.5h8" stroke="#222" stroke-width="1.1"/></svg><div class="a" style="left:1040px;top:244px;width:32px;height:25px;border:1px solid #111;background:linear-gradient(147deg,#14d47b 39%,#fdfdfb 44%)"></div><div class="t" style='left:1076.3px;top:250.00px;font-size:11px;letter-spacing:-0.35px;transform:scaleX(0.963);transform-origin:0 0;font-style:italic;color:#111;'>No mask selected</div><div class="a" style="left:1203.5px;top:249.5px;width:14.5px;height:13.5px;background:#8e8e8e;border:1px solid #555"></div><svg class="a" style="left:1205px;top:251px" width="13" height="12" viewBox="0 0 13 12"><circle cx="5.5" cy="5.5" r="3.8" fill="#e4e4e4" stroke="#333" stroke-width="1"/><path d="M9.5 6.5v5M7 9h5" stroke="#fff" stroke-width="2.2"/><path d="M9.5 7v4M7.5 9h4" stroke="#222" stroke-width="1"/></svg><svg class="a" style="left:1230px;top:248px" width="15" height="16" viewBox="0 0 15 16"><path d="M2 5L8 2l4 4l-3 6l-5 1.5z" fill="#eee" stroke="#333" stroke-width="1"/><path d="M4 13l4-4.5" stroke="#333" stroke-width=".9"/><path d="M1 3l1.5 1.5M3.5 .5l1 1.5" stroke="#333" stroke-width=".9" stroke-dasharray="1 1"/><path d="M11.5 10v5M9 12.5h5" stroke="#222" stroke-width="1.1"/></svg><div class="a" style="left:1040px;top:277px;width:208px;height:2px;background:linear-gradient(#8d8d8d 0,#8d8d8d 1px,#e6e6e6 1px)"></div><div class="t" style='left:1040.3px;top:285.00px;font-size:11px;letter-spacing:-0.35px;transform:scaleX(0.983);transform-origin:0 0;color:#a2a2a2;'>Density:</div><div class="fld" style="left:1192px;top:283px;width:56px;height:18.5px;"></div><div class="a" style="left:1046px;top:309.5px;width:196px;height:3px;background:#fbfbfb;border-top:1px solid #a8a8a8;border-left:1px solid #a8a8a8"></div><div class="t" style='left:1040.3px;top:323.00px;font-size:11px;letter-spacing:-0.35px;transform:scaleX(0.965);transform-origin:0 0;color:#a2a2a2;'>Feather:</div><div class="fld" style="left:1192px;top:320px;width:56px;height:18.5px;"></div><div class="a" style="left:1046px;top:346.5px;width:196px;height:3px;background:#fbfbfb;border-top:1px solid #a8a8a8;border-left:1px solid #a8a8a8"></div><div class="t" style='left:1040.3px;top:363.00px;font-size:11px;letter-spacing:-0.35px;transform:scaleX(0.936);transform-origin:0 0;color:#a2a2a2;'>Refine:</div><div class="btn" style="left:1161.5px;top:361px;width:87px;height:20.5px;"></div><div class="t" style='left:1175.3px;top:366.00px;font-size:11px;letter-spacing:-0.35px;color:#8a8a8a;'>Mask Edge...</div><div class="btn" style="left:1161.5px;top:389px;width:87px;height:20.5px;"></div><div class="t" style='left:1171.3px;top:394.00px;font-size:11px;letter-spacing:-0.33px;color:#8a8a8a;'>Color Range...</div><div class="btn" style="left:1161.5px;top:417px;width:87px;height:20.5px;"></div><div class="t" style='left:1190.3px;top:422.00px;font-size:11px;letter-spacing:0.30px;color:#8a8a8a;'>Invert</div><div class="a" style="left:1040px;top:445px;width:208px;height:1px;background:#8d8d8d"></div><svg class="a" style="left:1047px;top:448px" width="11" height="11" viewBox="0 0 11 11"><circle cx="5.5" cy="5.5" r="4.3" fill="none" stroke="#999" stroke-width="1" stroke-dasharray="1.2 1.2"/></svg><svg class="a" style="left:1071px;top:446px" width="18" height="14" viewBox="0 0 18 14"><path d="M9 1L17 7L9 13L1 7z" fill="#eaf6f8" stroke="#8cc4d0" stroke-width="1.2"/><path d="M9 3.5v5M6.5 6.5L9 9l2.5-2.5" fill="none" stroke="#5a9eac" stroke-width="1.1"/></svg><svg class="a" style="left:1099px;top:446px" width="15" height="14" viewBox="0 0 15 14"><path d="M1.5 7c3-4.5 9-4.5 12 0c-3 4.5-9 4.5-12 0z" fill="none" stroke="#c48a8a" stroke-width="1"/><circle cx="7.5" cy="7" r="2.2" fill="#c08a8a"/><path d="M1.5 1l12 12" stroke="#cc6a6a" stroke-width="1.1"/></svg><svg class="a" style="left:1231px;top:447px" width="10" height="13" viewBox="0 0 10 13"><path d="M1.5 4h7l-.8 8h-5.400z" fill="#f0f0f0" stroke="#777" stroke-width="1"/><path d="M.5 3.5h9M3.5 2h3" stroke="#777" stroke-width="1.2"/><path d="M3.7 6v4M6.3 6v4" stroke="#999" stroke-width=".9"/></svg><div class="a" style="left:1036px;top:464px;width:239px;height:4px;background:linear-gradient(#efefef 0,#efefef 1px,#3e3e3e 1px)"></div><div class="a" style="left:1036px;top:468px;width:239px;height:297px;background:#d6d6d6"></div><div class="a tabrow" style="left:1036px;top:468px;width:239px;height:17px;"></div><div class="a" style="left:1036px;top:468px;width:50.5px;height:18px;background:linear-gradient(#ececec,#d8d8d8);border-right:1px solid #777;border-left:1px solid #f4f4f4;"></div><div class="t" style='left:1042.9px;top:471.00px;font-size:10.5px;letter-spacing:-0.35px;transform:scaleX(0.917);transform-origin:0 0;font-weight:bold;color:#333;'>LAYERS</div><div class="a" style="left:1086.5px;top:468px;width:67px;height:16px;border-right:1px solid #6c6c6c;box-shadow:inset -2px 0 0 -1px #b4b4b4;"></div><div class="t" style='left:1092.9px;top:471.00px;font-size:10.5px;letter-spacing:-0.35px;transform:scaleX(0.959);transform-origin:0 0;font-weight:bold;color:#2c2c2c;'>CHANNELS</div><div class="a" style="left:1153.5px;top:468px;width:47px;height:16px;border-right:1px solid #6c6c6c;box-shadow:inset -2px 0 0 -1px #b4b4b4;"></div><div class="t" style='left:1160.9px;top:471.00px;font-size:10.5px;letter-spacing:-0.15px;font-weight:bold;color:#2c2c2c;'>PATHS</div><svg class="a" style="left:1257px;top:474px" width="15" height="8" viewBox="0 0 15 8"><path d="M0 1h4.5L2.250 4z" fill="#222"/><path d="M6 .5h8M6 3h8M6 5.5h8" stroke="#222" stroke-width="1.1"/></svg><div class="a" style="left:1040.5px;top:488.5px;width:116px;height:18px;background:#fff;border:1px solid #f2f2f2;box-shadow:inset 0 0 0 1px #c4c4c4"></div><div class="a" style="left:1138px;top:490.5px;width:1px;height:14px;background:#dcdcdc"></div><div class="t" style='left:1043.8px;top:492.00px;font-size:11px;letter-spacing:-0.35px;transform:scaleX(0.984);transform-origin:0 0;color:#8a8a8a;'>Normal</div><svg class="a" style="left:1145px;top:496.5px" width="7" height="4" viewBox="0 0 7 4"><path d="M0 0H7 L3.5 4Z" fill="#9a9a9a"/></svg><div class="t" style='left:1160.3px;top:491.00px;font-size:11px;letter-spacing:-0.25px;color:#a6a6a6;'>Opacity:</div><div class="fld" style="left:1201.5px;top:489px;width:36.5px;height:16.5px;"></div><div class="a" style="left:1237.5px;top:489px;width:17px;height:16.5px;border:1px solid #efefef;background:#dedede;box-shadow:inset 0 0 0 1px #c8c8c8"></div><div class="t" style='left:1206.8px;top:493.00px;font-size:11px;letter-spacing:-0.35px;transform:scaleX(0.947);transform-origin:0 0;color:#7c7c7c;'>100%</div><svg class="a" style="left:1243.5px;top:494px" width="4" height="6" viewBox="0 0 4 6"><path d="M0 0L4 3L0 6Z" fill="#9a9a9a"/></svg><div class="a" style="left:1038px;top:509px;width:235px;height:2px;background:linear-gradient(#a8a8a8 0,#a8a8a8 1px,#ececec 1px)"></div><div class="t" style='left:1043.3px;top:517.00px;font-size:11px;letter-spacing:0.10px;color:#a6a6a6;'>Lock:</div><div class="a" style="left:1075.5px;top:517px;width:11.5px;height:11px;border:1px solid #8a8a8a;background:conic-gradient(#fff 25%,#c8c8c8 0 50%,#fff 0 75%,#c8c8c8 0);background-size:6px 6px"></div><svg class="a" style="left:1093px;top:515px" width="14" height="14" viewBox="0 0 14 14"><path d="M13 1L7 8" stroke="#8a8a8a" stroke-width="2"/><path d="M7.5 7c-.5 3-3 5-6.5 5.5c2-1.5 3-3.5 4-6.5z" fill="#777"/></svg><svg class="a" style="left:1111px;top:516px" width="13" height="13" viewBox="0 0 13 13"><path d="M6.5 1v11M1 6.5h11" stroke="#777" stroke-width="1.1"/><path d="M6.5 0L4.5 2.5h4zM6.5 13L4.5 10.5h4zM0 6.5L2.5 4.5v4zM13 6.5L10.5 4.5v4z" fill="#777"/></svg><svg class="a" style="left:1130px;top:516px" width="11" height="12" viewBox="0 0 11 12"><path d="M2.5 6V4a3 3 0 0 1 6 0V6" fill="none" stroke="#777" stroke-width="1.5"/><rect x="1" y="5.5" width="9" height="6" fill="#8a8a8a" stroke="#666" stroke-width=".8"/></svg><div class="t" style='left:1183.3px;top:517.00px;font-size:11px;letter-spacing:-0.35px;color:#a6a6a6;'>Fill:</div><div class="fld" style="left:1201.5px;top:515px;width:36.5px;height:16.5px;"></div><div class="a" style="left:1237.5px;top:515px;width:17px;height:16.5px;border:1px solid #efefef;background:#dedede;box-shadow:inset 0 0 0 1px #c8c8c8"></div><div class="t" style='left:1206.8px;top:519.00px;font-size:11px;letter-spacing:-0.35px;transform:scaleX(0.947);transform-origin:0 0;color:#7c7c7c;'>100%</div><svg class="a" style="left:1243.5px;top:520px" width="4" height="6" viewBox="0 0 4 6"><path d="M0 0L4 3L0 6Z" fill="#9a9a9a"/></svg><div class="a" style="left:1038px;top:535px;width:235px;height:1px;background:#a8a8a8"></div><div class="a" style="left:1038px;top:536px;width:22.5px;height:40px;background:#d6d6d6;border-bottom:1px solid #a8a8a8"></div><div class="a" style="left:1060.5px;top:536px;width:197.5px;height:40px;background:#3399ff"></div><div class="a" style="left:1041px;top:547px;width:15px;height:15px;border:1px solid #b0b0b0;background:#dadada"></div><svg class="a" style="left:1042.5px;top:550.5px" width="13" height="8" viewBox="0 0 13 8"><path d="M.5 4.5c3-5 9-5 12 0c-3 3.5-9 3.5-12 0z" fill="#fff" stroke="#111" stroke-width="1"/><circle cx="6.5" cy="4" r="2.6" fill="#111"/><path d="M.5 3c3-3.5 9-3.5 12 0" fill="none" stroke="#111" stroke-width="1.3"/></svg><div class="a" style="left:1064px;top:543px;width:32.5px;height:25px;border:1px solid #111;background:linear-gradient(147deg,#14d47b 39%,#fdfdfb 44%)"></div><div class="t" style='left:1104.3px;top:551.00px;font-size:11px;letter-spacing:-0.09px;font-style:italic;color:#fff;'>Background</div><svg class="a" style="left:1233px;top:549.5px" width="10" height="11" viewBox="0 0 10 11"><path d="M2.5 5V3.5a2.5 2.5 0 0 1 5 0V5" fill="none" stroke="#111" stroke-width="1.3"/><rect x="1" y="5" width="8" height="5.5" fill="#f4ead8" stroke="#111" stroke-width="1"/><rect x="4.2" y="6.5" width="1.6" height="2.5" fill="#111"/></svg><div class="a" style="left:1258px;top:536px;width:15.5px;height:210px;background:#f0f0f0;border-left:1px solid #dcdcdc"></div><svg class="a" style="left:1262px;top:543px" width="8" height="5" viewBox="0 0 8 5"><path d="M0 5L4 0L8 5z" fill="#9a9a9a"/></svg><svg class="a" style="left:1262px;top:735px" width="8" height="5" viewBox="0 0 8 5"><path d="M0 0L4 5L8 0z" fill="#9a9a9a"/></svg><div class="a" style="left:1036px;top:746px;width:239px;height:1px;background:#9a9a9a"></div><div class="a" style="left:1036px;top:747px;width:239px;height:1px;background:#e8e8e8"></div><svg class="a" style="left:1074px;top:751px" width="17" height="8" viewBox="0 0 17 8"><rect x="1" y="1.5" width="8" height="5" rx="2.5" fill="none" stroke="#7a7a7a" stroke-width="1.4"/><rect x="8" y="1.5" width="8" height="5" rx="2.5" fill="none" stroke="#7a7a7a" stroke-width="1.4"/></svg><div class="t" style='left:1101.3px;top:750.00px;font-size:12px;font-family:"Liberation Serif","DejaVu Serif",serif;font-weight:bold;font-style:italic;color:#7a7a7a;'>fx</div><svg class="a" style="left:1113.5px;top:759px" width="4" height="2" viewBox="0 0 4 2"><path d="M0 0h4L2 2z" fill="#7a7a7a"/></svg><div class="a" style="left:1130.5px;top:749px;width:13px;height:12px;background:#a8a8a8;border:1px solid #777"></div><div class="a" style="left:1133.5px;top:751.5px;width:7px;height:7px;background:#f4f4f4;border-radius:50%;border:1px solid #888"></div><svg class="a" style="left:1157px;top:749px" width="16" height="13" viewBox="0 0 16 13"><circle cx="6" cy="6" r="5" fill="#fff" stroke="#333" stroke-width="1"/><path d="M2.5 9.5A5 5 0 0 0 9.5 2.5z" fill="#333"/><path d="M12 10h3.5l-1.750 2.200z" fill="#333"/></svg><svg class="a" style="left:1185px;top:750px" width="12" height="10" viewBox="0 0 12 10"><path d="M.5 9.5V.5h4l1 1.5h6v7.5z" fill="#f2f2f2" stroke="#8a8a8a" stroke-width="1"/></svg><svg class="a" style="left:1212px;top:750px" width="11" height="11" viewBox="0 0 11 11"><path d="M.5 10.5V.5h10v10z" fill="#f2f2f2" stroke="#8a8a8a"/><path d="M3 10V5.5h7" fill="none" stroke="#666" stroke-width="1.5"/></svg><svg class="a" style="left:1240px;top:749px" width="10" height="12" viewBox="0 0 10 12"><path d="M1.5 3.5h7l-.8 8h-5.400z" fill="#f0f0f0" stroke="#777" stroke-width="1"/><path d="M.5 3h9M3.5 1.5h3" stroke="#777" stroke-width="1.2"/><path d="M3.7 5.5v4M6.3 5.5v4" stroke="#999" stroke-width=".9"/></svg>
<div class="t" style='left:51.3px;top:95.00px;font-size:11px;letter-spacing:0.08px;font-weight:bold;color:#333;'>Untitled-1 @ 33,3% (RGB/8) *</div><div class="a" style="left:208.5px;top:95px;width:12px;height:12px;border:1px solid #8e8e8e;background:#dcdcdc"></div><svg class="a" style="left:211.5px;top:98px" width="6" height="6" viewBox="0 0 6 6"><path d="M.5 .5l5 5M5.5 .5l-5 5" stroke="#444" stroke-width="1.2"/></svg><div class="a" style="left:42px;top:751px;width:47.5px;height:14px;background:#fff"></div><div class="t" style='left:48.3px;top:753.00px;font-size:11px;letter-spacing:-0.35px;transform:scaleX(0.960);transform-origin:0 0;color:#111;'>33,33%</div><div class="a" style="left:90px;top:751px;width:1px;height:14px;background:#b8b8b8"></div><div class="a" style="left:95.5px;top:752.5px;width:11px;height:11px;border:1px solid #777;border-radius:50%;background:#e8e8e8"></div><svg class="a" style="left:98px;top:754px" width="7" height="7" viewBox="0 0 7 7"><path d="M3 1v3h3" fill="none" stroke="#555" stroke-width="1.1"/></svg><div class="a" style="left:110px;top:751px;width:1px;height:14px;background:#9c9c9c"></div><div class="t" style='left:124.3px;top:753.00px;font-size:11px;letter-spacing:-0.35px;transform:scaleX(0.953);transform-origin:0 0;color:#111;'>2000 pixels x 1500 pixels (72 ppi)</div><div class="a" style="left:283px;top:751px;width:1px;height:14px;background:#9c9c9c"></div><svg class="a" style="left:287px;top:753.5px" width="5" height="9" viewBox="0 0 5 9"><path d="M0 0L5 4.5L0 9z" fill="#111"/></svg><svg class="a" style="left:302px;top:755px" width="4" height="7" viewBox="0 0 4 7"><path d="M4 0L0 3.5L4 7z" fill="#9a9a9a"/></svg><svg class="a" style="left:973px;top:755px" width="4" height="7" viewBox="0 0 4 7"><path d="M0 0L4 3.5L0 7z" fill="#9a9a9a"/></svg><svg class="a" style="left:988px;top:118px" width="8" height="5" viewBox="0 0 8 5"><path d="M0 5L4 0L8 5z" fill="#9a9a9a"/></svg><svg class="a" style="left:988px;top:739px" width="8" height="5" viewBox="0 0 8 5"><path d="M0 0L4 5L8 0z" fill="#9a9a9a"/></svg>
<div id="frameB" class="a"></div>
<div id="frameL" class="a"></div>
<div id="frameL2" class="a"></div>
<div id="frameR2" class="a"></div>
<div id="frameR" class="a"></div>
<div id="frameT" class="a"></div>
<div id="taskbar" class="a"></div>
<svg class="a" style="left:8px;top:765px" width="44" height="35" viewBox="0 0 44 35"><defs><radialGradient id="orb" cx=".5" cy=".95" r=".75"><stop offset="0" stop-color="#28c0f0"/><stop offset=".35" stop-color="#1878d0"/><stop offset=".75" stop-color="#1858a8"/><stop offset="1" stop-color="#3a6a98"/></radialGradient><linearGradient id="orbg" x1="0" y1="0" x2="0" y2="1"><stop offset="0" stop-color="#fff" stop-opacity=".75"/><stop offset="1" stop-color="#fff" stop-opacity=".25"/></linearGradient></defs><circle cx="21.7" cy="22" r="20.8" fill="#0a1624"/><circle cx="21.7" cy="22" r="19.3" fill="url(#orb)"/><path d="M3 19a18.7 18.7 0 0 1 37.400 0c-6 3.5-12 1-18.7 0c-6.7-1-12.7-3-18.7 0z" fill="url(#orbg)"/><path d="M12.5 8.5c3.5-1.8 7-1.8 10.5 .2l-2 9.300c-3.5-1.8-7-1.8-10.5 0z" fill="#e8602a"/><path d="M24.5 10c3.5 1.600 6.5 1.600 10-.3l-2 9.300c-3.5 1.900-6.5 1.900-10 .3z" fill="#86c440"/><path d="M9.5 20c3.5-1.8 7-1.8 10.5 .2l-2 9.300c-3.5-1.8-7-1.8-10.5 0z" fill="#3aa4e8"/><path d="M21.5 21.5c3.5 1.600 6.5 1.600 10-.3l-2 9.300c-3.5 1.900-6.5 1.900-10 .3z" fill="#f8c020"/></svg><svg class="a" style="left:65px;top:778px" width="17" height="15" viewBox="0 0 17 15"><rect x=".5" y=".5" width="15.5" height="13" fill="#4a7ac8" stroke="#c8d8f0" stroke-width="1"/><rect x="1.5" y="1.5" width="13.5" height="8" fill="#5a8ad8"/><rect x="2" y="11" width="4" height="1.5" fill="#dde"/></svg><svg class="a" style="left:88px;top:778px" width="17" height="15" viewBox="0 0 17 15"><rect x=".5" y=".5" width="15.5" height="13" fill="#2a5ab0" stroke="#c8d8f0" stroke-width="1"/><rect x="2.5" y="2.5" width="7" height="4.5" fill="#e8eef8"/><rect x="5" y="5" width="7" height="4.5" fill="#fff" stroke="#2a5ab0" stroke-width=".6"/><rect x="7.5" y="7.5" width="7" height="4.5" fill="#e8eef8" stroke="#2a5ab0" stroke-width=".6"/></svg><div class="t" style='left:111.3px;top:775.00px;font-size:20px;font-weight:bold;font-style:italic;color:#3aa0e8;'>e</div><svg class="a" style="left:110px;top:776px" width="20" height="17" viewBox="0 0 20 17"><ellipse cx="10" cy="9" rx="9.5" ry="4" fill="none" stroke="#f0b428" stroke-width="1.6" transform="rotate(-28 10 9)"/></svg><svg class="a" style="left:134px;top:777px" width="17" height="17" viewBox="0 0 17 17"><rect x="2.5" y=".5" width="13" height="10.5" fill="#2a4ae0" stroke="#b8c8e8" stroke-width="1"/><path d="M3 1h12L3 10.5z" fill="#4a7af0"/><rect x="7" y="11.5" width="4" height="2.5" fill="#aab"/><rect x="4" y="14" width="10" height="1.5" fill="#ccd"/><rect x="0" y="6" width="2.5" height="9" fill="#99a"/></svg><svg class="a" style="left:173px;top:777px" width="9" height="6" viewBox="0 0 9 6"><path d="M.5 .5L3.5 3L.5 5.5M5 .5L8 3L5 5.5" fill="none" stroke="#fff" stroke-width="1.3"/></svg><div class="tbtn" style="left:190px;top:773px;width:156px;height:25.5px;border-color:#6a6c6e;background:linear-gradient(#54575a 0,#3a3c3f 11px,#0e0e0e 12px,#161616 25px)"></div><div class="tbtn" style="left:350px;top:773px;width:156.5px;height:25.5px;border-color:#55585a;background:linear-gradient(#25272a 0,#17181a 11px,#050505 12px,#0a0a0a 25px);box-shadow:inset 0 0 3px #000"></div><svg class="a" style="left:197px;top:776.5px" width="17" height="17" viewBox="0 0 17 17"><circle cx="8.5" cy="8.5" r="8" fill="#e8781a"/><circle cx="9" cy="7" r="4.8" fill="#3a5ac8"/><path d="M1 6c1 6 6 9 12 7c-3 .5-7-1-8-5c1.5 1.5 3 1 3.5 0c-2-.5-3-3-1.5-5c-2.5 0-4 1-6 3z" fill="#f6a01a"/><path d="M8.5 3.5c1.5-.5 3 0 3.5 1.5l-2 .5z" fill="#f8d8a0"/></svg><div class="t" style='left:217.8px;top:779.00px;font-size:12.5px;letter-spacing:-0.35px;color:#fff;'>SG Fórum - Photosh...</div><div class="a" style="left:360px;top:778px;width:15.5px;height:15.5px;background:linear-gradient(135deg,#2a8ae8,#0a3a9a);border:1px solid #0a2a6a"></div><div class="t" style='left:361.4px;top:782.00px;font-size:9.5px;letter-spacing:0.26px;font-weight:bold;color:#9fd0ff;'>Ps</div><div class="t" style='left:378.8px;top:779.00px;font-size:12.5px;letter-spacing:-0.35px;color:#fff;'>Untitled-1 @ 33,3% ...</div><div class="t" style='left:1072.3px;top:776.00px;font-size:12px;letter-spacing:-0.20px;color:#fff;'>HU</div><svg class="a" style="left:1117px;top:777px" width="16" height="13" viewBox="0 0 16 13"><rect width="16" height="13" rx="1.5" fill="#b4aef0"/><rect x="1.5" y="2" width="13" height="9" fill="#fff"/><path d="M1.5 2L8 7.5L14.5 2M1.5 11L6 6M14.5 11L10 6" fill="none" stroke="#b4aef0" stroke-width="1.1"/></svg><svg class="a" style="left:1153px;top:777px" width="16" height="13" viewBox="0 0 16 13"><rect width="16" height="13" rx="1.5" fill="#b4aef0"/><rect x="1.5" y="2" width="13" height="9" fill="#fff"/><path d="M1.5 2L8 7.5L14.5 2M1.5 11L6 6M14.5 11L10 6" fill="none" stroke="#b4aef0" stroke-width="1.1"/></svg><svg class="a" style="left:1135.5px;top:775px" width="15" height="16" viewBox="0 0 15 16"><rect width="15" height="16" fill="#23786c"/><circle cx="7.5" cy="8" r="6.3" fill="#d8f4c0"/><circle cx="7.5" cy="8" r="4.8" fill="#58c81a"/><circle cx="7.5" cy="8" r="2" fill="#0a3a0a"/></svg><svg class="a" style="left:1182px;top:775px" width="16" height="16" viewBox="0 0 16 16"><rect x="7" y="3" width="8" height="12" rx="1" fill="#b8e8b0" stroke="#e8f8e8" stroke-width="1"/><rect x="9.5" y="1.5" width="3" height="1.5" fill="#e8f8e8"/><path d="M2 2v3M5.5 2v3" stroke="#fff" stroke-width="1.2"/><path d="M1 5h5.5v4l-1.5 1.5v4h-2.5v-4L1 9z" fill="#f4f4f4"/></svg><svg class="a" style="left:1199.5px;top:775px" width="16" height="16" viewBox="0 0 16 16"><rect x="4.5" y=".5" width="10" height="7.5" fill="#2a6ad8" stroke="#e8f0ff" stroke-width="1"/><rect x=".5" y="4.5" width="10" height="7.5" fill="#1a4ab8" stroke="#e8f0ff" stroke-width="1"/><rect x="3" y="13" width="5" height="1.5" fill="#dde"/><circle cx="11.5" cy="12" r="3.8" fill="#2a9ae8"/><path d="M9.5 11c1-1.5 3-1 3.5 1c-1 1.5-2 2-3 1.5z" fill="#5ac83a"/></svg><svg class="a" style="left:1217px;top:775px" width="16" height="16" viewBox="0 0 16 16"><path d="M1.5 5.5h3L9 2v12L4.5 10.5h-3z" fill="#f0f0f0" stroke="#bbb" stroke-width=".6"/><path d="M10.5 6c1 1.2 1 2.8 0 4" fill="none" stroke="#58c85a" stroke-width="1.2"/><path d="M12.5 4.5c1.8 2 1.8 5 0 7" fill="none" stroke="#58c85a" stroke-width="1.2"/></svg><div class="t" style='left:1238.8px;top:778.00px;font-size:12px;letter-spacing:-0.22px;color:#fff;'>10:49</div>
</body>
</html>
